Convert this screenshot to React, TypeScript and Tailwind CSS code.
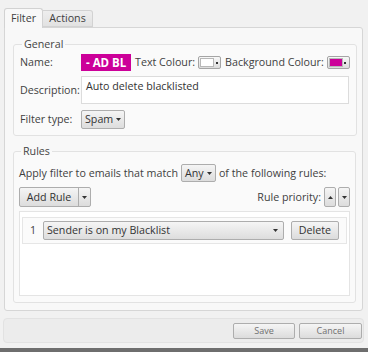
import React from 'react';

// Filter editor dialog: "Filter" tab with General + Rules groups, Save/Cancel bar.

const FONT = { fontFamily: '"Open Sans", "Noto Sans", sans-serif' };

function Caret({ up = false }: { up?: boolean }) {
  return (
    <svg width="5" height="3" viewBox="0 0 5 3" className="shrink-0">
      <path d={up ? 'M0 3 L2.5 0 L5 3 Z' : 'M0 0 L5 0 L2.5 3 Z'} fill="#333" />
    </svg>
  );
}

function DropDown({ label, className }: { label: string; className: string }) {
  return (
    <div
      className={`flex items-center justify-between pl-[3px] pr-[3px] border border-[#adadad] rounded-[2px] bg-gradient-to-b from-[#f5f5f5] to-[#dddddd] text-[#333] whitespace-nowrap ${className}`}
    >
      <span>{label}</span>
      <Caret />
    </div>
  );
}

function ColourPicker({ swatch }: { swatch: string }) {
  return (
    <div className="shrink-0 flex items-center w-[23px] h-[13px] border border-[#a5a5a5] rounded-[2px] bg-gradient-to-b from-[#f8f8f8] to-[#dcdcdc] p-[1px]">
      <div className={`w-[14px] h-[9px] border border-[#b8b8b8] ${swatch}`} />
      <div className="flex-1 flex items-center justify-center">
        <div className="w-[2px] h-[2px] bg-[#333]" />
      </div>
    </div>
  );
}

function SmallButton({ children, className }: { children: React.ReactNode; className: string }) {
  return (
    <div
      className={`shrink-0 flex items-center justify-center border border-[#adadad] rounded-[2px] bg-gradient-to-b from-[#f5f5f5] to-[#dcdcdc] text-[#333] ${className}`}
    >
      {children}
    </div>
  );
}

export default function App() {
  return (
    <div style={FONT} className="w-[368px] h-[352px] bg-[#f1f1f1] flex flex-col text-[10.7px] text-[#3f3f3f] whitespace-nowrap overflow-hidden">
      {/* Tabs */}
      <div className="flex items-end pl-[4px] pt-[7px] h-[27px]">
        <div className="w-[39px] h-[20px] border border-b-0 border-[#d2d2d2] rounded-t-[3px] bg-[#f8f8f8] flex items-center justify-center relative top-[1px]">
          Filter
        </div>
        <div className="w-[50px] h-[17px] border border-l-0 border-[#d2d2d2] rounded-tr-[3px] bg-gradient-to-b from-[#eeeeee] to-[#e2e2e2] flex items-center justify-center">
          Actions
        </div>
      </div>

      {/* Tab content */}
      <div className="ml-[4px] w-[359px] h-[284px] border border-[#d6d6d6] rounded-b-[3px] rounded-tr-[3px] bg-[#f8f8f8] pl-[8px] pr-[6px]">
        {/* General */}
        <fieldset className="mt-[9px] h-[99px] border border-[#e2e2e2] rounded-[3px] bg-[#fafafa] px-[6px]">
          <legend className="ml-[2px] px-[2px] leading-[15px] text-[#444]">General</legend>
          <div className="flex items-center h-[17px] mt-[2px]">
            <span className="w-[61px] shrink-0">Name:</span>
            <div className="shrink-0 w-[50px] h-[17px] bg-[#cc0099] text-white font-bold text-[11.5px] flex items-center pl-[5px]">
              - AD BL
            </div>
            <span className="ml-[4px] mr-[3px]">Text Colour:</span>
            <ColourPicker swatch="bg-white" />
            <span className="ml-[4px] mr-[3px]">Background Colour:</span>
            <ColourPicker swatch="bg-[#cc0099]" />
          </div>
          <div className="flex items-center mt-[5px]">
            <span className="w-[61px] shrink-0">Description:</span>
            <div className="w-[268px] h-[28px] border border-[#dcdcdc] bg-white px-[4px] pt-[1px] text-[#333]">
              Auto delete blacklisted
            </div>
          </div>
          <div className="flex items-center mt-[6px]">
            <span className="w-[61px] shrink-0">Filter type:</span>
            <DropDown label="Spam" className="w-[44px] h-[19px]" />
          </div>
        </fieldset>

        {/* Rules */}
        <fieldset className="mt-[8px] h-[159px] border border-[#e2e2e2] rounded-[3px] bg-[#fafafa] px-[5px]">
          <legend className="ml-[2px] px-[2px] leading-[15px] text-[#444]">Rules</legend>
          <div className="flex items-center h-[18px] mt-[5px]">
            <span className="mr-[3px]">Apply filter to emails that match</span>
            <DropDown label="Any" className="w-[35px] h-[18px]" />
            <span className="ml-[3px]">of the following rules:</span>
          </div>
          <div className="flex items-center h-[20px] mt-[5px]">
            <div className="flex h-[20px] border border-[#adadad] rounded-[2px] bg-gradient-to-b from-[#f5f5f5] to-[#dcdcdc] text-[#333]">
              <div className="w-[59px] flex items-center justify-center border-r border-[#adadad]">Add Rule</div>
              <div className="w-[11px] flex items-center justify-center">
                <Caret />
              </div>
            </div>
            <span className="ml-auto mr-[3px]">Rule priority:</span>
            <SmallButton className="w-[12px] h-[20px]">
              <Caret up />
            </SmallButton>
            <SmallButton className="w-[12px] h-[20px] ml-[2px]">
              <Caret />
            </SmallButton>
          </div>
          <div className="mt-[4px] h-[85px] border border-[#e4e4e4] bg-white px-[2px] pt-[5px]">
            <div className="flex items-center h-[27px] border border-[#e6e6e6] bg-[#fbfbfb] pl-[7px] pr-[7px]">
              <span className="w-[13px]">1</span>
              <DropDown label="Sender is on my Blacklist" className="w-[241px] h-[19px] pr-[5px]" />
              <SmallButton className="ml-auto w-[48px] h-[19px]">Delete</SmallButton>
            </div>
          </div>
        </fieldset>
      </div>

      {/* Button bar */}
      <div className="mt-[7px] ml-[3px] w-[361px] h-[25px] rounded-[4px] border border-[#e2e2e2] bg-[#ececec] flex items-center justify-end gap-[4px] pr-[1px]">
        <SmallButton className="w-[62px] h-[16px] text-[9px] text-[#707070]">Save</SmallButton>
        <SmallButton className="w-[63px] h-[16px] text-[9px] text-[#707070]">Cancel</SmallButton>
      </div>

      <div className="mt-auto h-[4px] bg-[#6e6e6e]" />
    </div>
  );
}
